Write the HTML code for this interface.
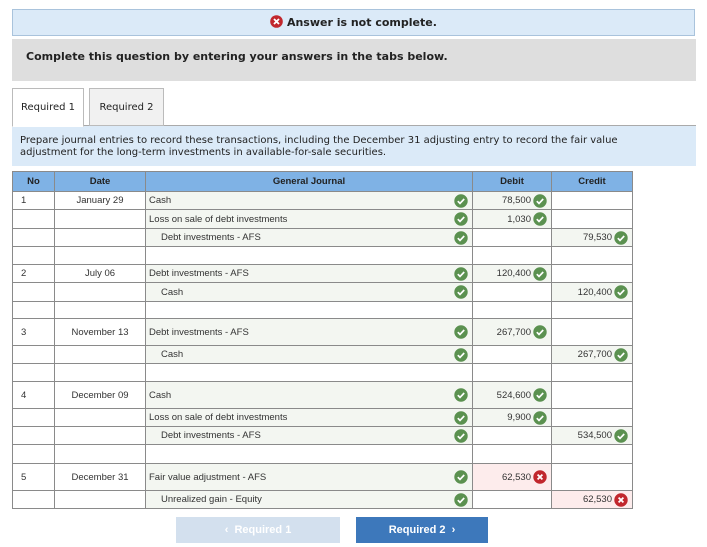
<!DOCTYPE html>
<html><head><meta charset="utf-8"><style>
body{margin:0;width:707px;height:547px;background:#fff;font-family:"Liberation Sans",Arial,sans-serif;position:relative;overflow:hidden}
.v{font-family:"DejaVu Sans",Verdana,sans-serif}
.ban{position:absolute;left:12px;top:9px;width:683px;height:27px;background:#dbeaf8;border:1px solid #a9c3dc;box-sizing:border-box;font-size:11px;font-weight:bold;color:#222;text-align:center;line-height:25px}
.gray{position:absolute;left:12px;top:39px;width:684px;height:42px;background:#dedede;font-size:11px;font-weight:bold;color:#222;line-height:36px;padding-left:14px;box-sizing:border-box}
.tab{position:absolute;top:88px;height:38px;border:1px solid #bbb;box-sizing:border-box;font-size:10px;line-height:38px;text-align:center;color:#222}
.tabline{position:absolute;left:12px;top:125px;width:684px;height:1px;background:#aaa}
.inst{position:absolute;left:12px;top:126px;width:684px;height:40px;background:#dbeaf8;font-size:10px;color:#222;padding:9px 50px 0 8px;box-sizing:border-box;line-height:12px}
table{position:absolute;left:12px;top:171px;border-collapse:collapse;width:620px;table-layout:fixed;font-size:9.5px;color:#333}
td,th{border:1px solid #8a8a8a;padding:0;position:relative;white-space:nowrap;vertical-align:middle}
th{background:#7fb2e5;font-weight:bold;font-size:9.5px;height:19px;color:#222}
.g{background:#f3f6f1}
.p{background:#fdecec}
.c{text-align:center}
.r{text-align:right;padding-right:20px}
.gj{padding-left:3px;padding-right:20px}
.in{padding-left:15px}
svg.i{position:absolute;right:4px;top:50%;margin-top:-7px}
.btn{position:absolute;top:517px;height:26px;font-size:11px;font-weight:bold;color:#fff;text-align:center;line-height:26px}
</style></head><body>
<div class="ban v"><svg width="13" height="13" style="vertical-align:-2px"><circle cx="6.5" cy="6.5" r="6.3" fill="#c1272d"/><path d="M4 4l5 5M9 4l-5 5" stroke="#fff" stroke-width="1.8"/></svg> Answer is not complete.</div>
<div class="gray v">Complete this question by entering your answers in the tabs below.</div>
<div class="tabline"></div>
<div class="tab v" style="left:12px;width:72px;background:#fff;border-bottom:1px solid #fff;height:39px;z-index:2">Required 1</div>
<div class="tab v" style="left:89px;width:75px;background:#f1f1f1">Required 2</div>
<div class="inst v">Prepare journal entries to record these transactions, including the December 31 adjusting entry to record the fair value adjustment for the long-term investments in available-for-sale securities.</div>
<svg width="0" height="0" style="position:absolute"><defs>
<g id="ok"><circle cx="7" cy="7" r="6.7" fill="#5b9150"/><path d="M3.8 7.2l2.2 2.2 4.2-4.4" stroke="#fff" stroke-width="1.7" fill="none"/></g>
<g id="no"><circle cx="7" cy="7" r="6.7" fill="#c1272d"/><path d="M4.6 4.6l4.8 4.8M9.4 4.6l-4.8 4.8" stroke="#fff" stroke-width="1.8"/></g>
</defs></svg>
<table>
<colgroup><col style="width:42px"><col style="width:91px"><col style="width:327px"><col style="width:79px"><col style="width:81px"></colgroup>
<tr><th>No</th><th>Date</th><th>General Journal</th><th>Debit</th><th>Credit</th></tr>
<tr style="height:18px"><td style="padding-left:8px">1</td><td class="c">January 29</td><td class="g gj">Cash<svg class="i" width="14" height="14"><use href="#ok"/></svg></td><td class="g r">78,500<svg class="i" width="14" height="14"><use href="#ok"/></svg></td><td></td></tr>
<tr style="height:19px"><td></td><td></td><td class="g gj">Loss on sale of debt investments<svg class="i" width="14" height="14"><use href="#ok"/></svg></td><td class="g r">1,030<svg class="i" width="14" height="14"><use href="#ok"/></svg></td><td></td></tr>
<tr style="height:18px"><td></td><td></td><td class="g gj in">Debt investments - AFS<svg class="i" width="14" height="14"><use href="#ok"/></svg></td><td></td><td class="g r">79,530<svg class="i" width="14" height="14"><use href="#ok"/></svg></td></tr>
<tr style="height:18px"><td></td><td></td><td></td><td></td><td></td></tr>
<tr style="height:18px"><td style="padding-left:8px">2</td><td class="c">July 06</td><td class="g gj">Debt investments - AFS<svg class="i" width="14" height="14"><use href="#ok"/></svg></td><td class="g r">120,400<svg class="i" width="14" height="14"><use href="#ok"/></svg></td><td></td></tr>
<tr style="height:19px"><td></td><td></td><td class="g gj in">Cash<svg class="i" width="14" height="14"><use href="#ok"/></svg></td><td></td><td class="g r">120,400<svg class="i" width="14" height="14"><use href="#ok"/></svg></td></tr>
<tr style="height:17px"><td></td><td></td><td></td><td></td><td></td></tr>
<tr style="height:27px"><td style="padding-left:8px">3</td><td class="c">November 13</td><td class="g gj">Debt investments - AFS<svg class="i" width="14" height="14"><use href="#ok"/></svg></td><td class="g r">267,700<svg class="i" width="14" height="14"><use href="#ok"/></svg></td><td></td></tr>
<tr style="height:18px"><td></td><td></td><td class="g gj in">Cash<svg class="i" width="14" height="14"><use href="#ok"/></svg></td><td></td><td class="g r">267,700<svg class="i" width="14" height="14"><use href="#ok"/></svg></td></tr>
<tr style="height:18px"><td></td><td></td><td></td><td></td><td></td></tr>
<tr style="height:27px"><td style="padding-left:8px">4</td><td class="c">December 09</td><td class="g gj">Cash<svg class="i" width="14" height="14"><use href="#ok"/></svg></td><td class="g r">524,600<svg class="i" width="14" height="14"><use href="#ok"/></svg></td><td></td></tr>
<tr style="height:18px"><td></td><td></td><td class="g gj">Loss on sale of debt investments<svg class="i" width="14" height="14"><use href="#ok"/></svg></td><td class="g r">9,900<svg class="i" width="14" height="14"><use href="#ok"/></svg></td><td></td></tr>
<tr style="height:18px"><td></td><td></td><td class="g gj in">Debt investments - AFS<svg class="i" width="14" height="14"><use href="#ok"/></svg></td><td></td><td class="g r">534,500<svg class="i" width="14" height="14"><use href="#ok"/></svg></td></tr>
<tr style="height:19px"><td></td><td></td><td></td><td></td><td></td></tr>
<tr style="height:27px"><td style="padding-left:8px">5</td><td class="c">December 31</td><td class="g gj">Fair value adjustment - AFS<svg class="i" width="14" height="14"><use href="#ok"/></svg></td><td class="p r">62,530<svg class="i" width="14" height="14"><use href="#no"/></svg></td><td></td></tr>
<tr style="height:18px"><td></td><td></td><td class="g gj in">Unrealized gain - Equity<svg class="i" width="14" height="14"><use href="#ok"/></svg></td><td></td><td class="p r">62,530<svg class="i" width="14" height="14"><use href="#no"/></svg></td></tr>
</table>
<div class="btn" style="left:176px;width:164px;background:#d3e0ee">&lsaquo;&nbsp; Required 1</div>
<div class="btn" style="left:356px;width:132px;background:#3d78bb">Required 2 &nbsp;&rsaquo;</div>
</body></html>
